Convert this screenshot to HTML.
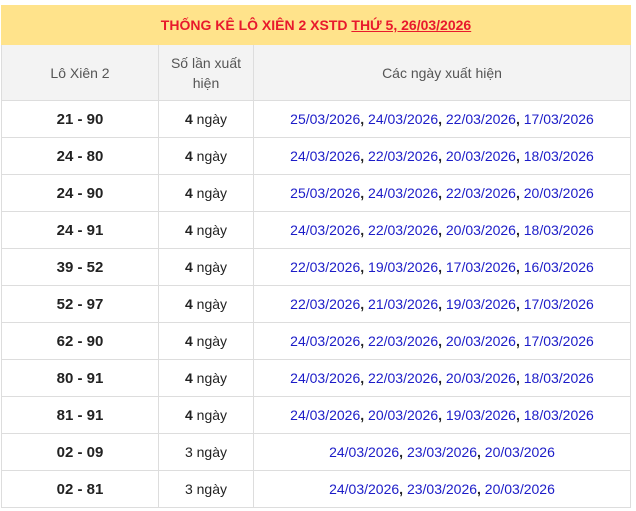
<!DOCTYPE html><html><head><style>
body{margin:0;background:#fff;font-family:"Liberation Sans",Arial,sans-serif;}
table{position:absolute;left:1px;top:5px;width:630px;border-collapse:collapse;table-layout:fixed;}
td,th{border:1px solid #ddd;text-align:center;font-size:14px;padding:0;}
.t{background:#ffe38b;height:38px;color:#e8192c;font-weight:bold;font-size:14px;border-color:#ffe38b}
.t u{text-decoration:underline}
th{background:#f3f3f3;font-weight:normal;color:#555;height:55px;line-height:20px}
td{height:36px;color:#222}
.n{font-weight:bold;font-size:15px}
.d{color:#1c1cc8}
.d b{color:#222}
</style></head><body>
<table>
<col style="width:157px"><col style="width:95px"><col>
<tr><td colspan="3" class="t">THỐNG KÊ LÔ XIÊN 2 XSTD <u>THỨ 5, 26/03/2026</u></td></tr>
<tr><th>Lô Xiên 2</th><th>Số lần xuất<br>hiện</th><th>Các ngày xuất hiện</th></tr>
<tr><td class="n">21 - 90</td><td><b>4</b> ngày</td><td class="d">25/03/2026<b>,</b> 24/03/2026<b>,</b> 22/03/2026<b>,</b> 17/03/2026</td></tr>
<tr><td class="n">24 - 80</td><td><b>4</b> ngày</td><td class="d">24/03/2026<b>,</b> 22/03/2026<b>,</b> 20/03/2026<b>,</b> 18/03/2026</td></tr>
<tr><td class="n">24 - 90</td><td><b>4</b> ngày</td><td class="d">25/03/2026<b>,</b> 24/03/2026<b>,</b> 22/03/2026<b>,</b> 20/03/2026</td></tr>
<tr><td class="n">24 - 91</td><td><b>4</b> ngày</td><td class="d">24/03/2026<b>,</b> 22/03/2026<b>,</b> 20/03/2026<b>,</b> 18/03/2026</td></tr>
<tr><td class="n">39 - 52</td><td><b>4</b> ngày</td><td class="d">22/03/2026<b>,</b> 19/03/2026<b>,</b> 17/03/2026<b>,</b> 16/03/2026</td></tr>
<tr><td class="n">52 - 97</td><td><b>4</b> ngày</td><td class="d">22/03/2026<b>,</b> 21/03/2026<b>,</b> 19/03/2026<b>,</b> 17/03/2026</td></tr>
<tr><td class="n">62 - 90</td><td><b>4</b> ngày</td><td class="d">24/03/2026<b>,</b> 22/03/2026<b>,</b> 20/03/2026<b>,</b> 17/03/2026</td></tr>
<tr><td class="n">80 - 91</td><td><b>4</b> ngày</td><td class="d">24/03/2026<b>,</b> 22/03/2026<b>,</b> 20/03/2026<b>,</b> 18/03/2026</td></tr>
<tr><td class="n">81 - 91</td><td><b>4</b> ngày</td><td class="d">24/03/2026<b>,</b> 20/03/2026<b>,</b> 19/03/2026<b>,</b> 18/03/2026</td></tr>
<tr><td class="n">02 - 09</td><td>3 ngày</td><td class="d">24/03/2026<b>,</b> 23/03/2026<b>,</b> 20/03/2026</td></tr>
<tr><td class="n">02 - 81</td><td>3 ngày</td><td class="d">24/03/2026<b>,</b> 23/03/2026<b>,</b> 20/03/2026</td></tr>
</table>
</body></html>
